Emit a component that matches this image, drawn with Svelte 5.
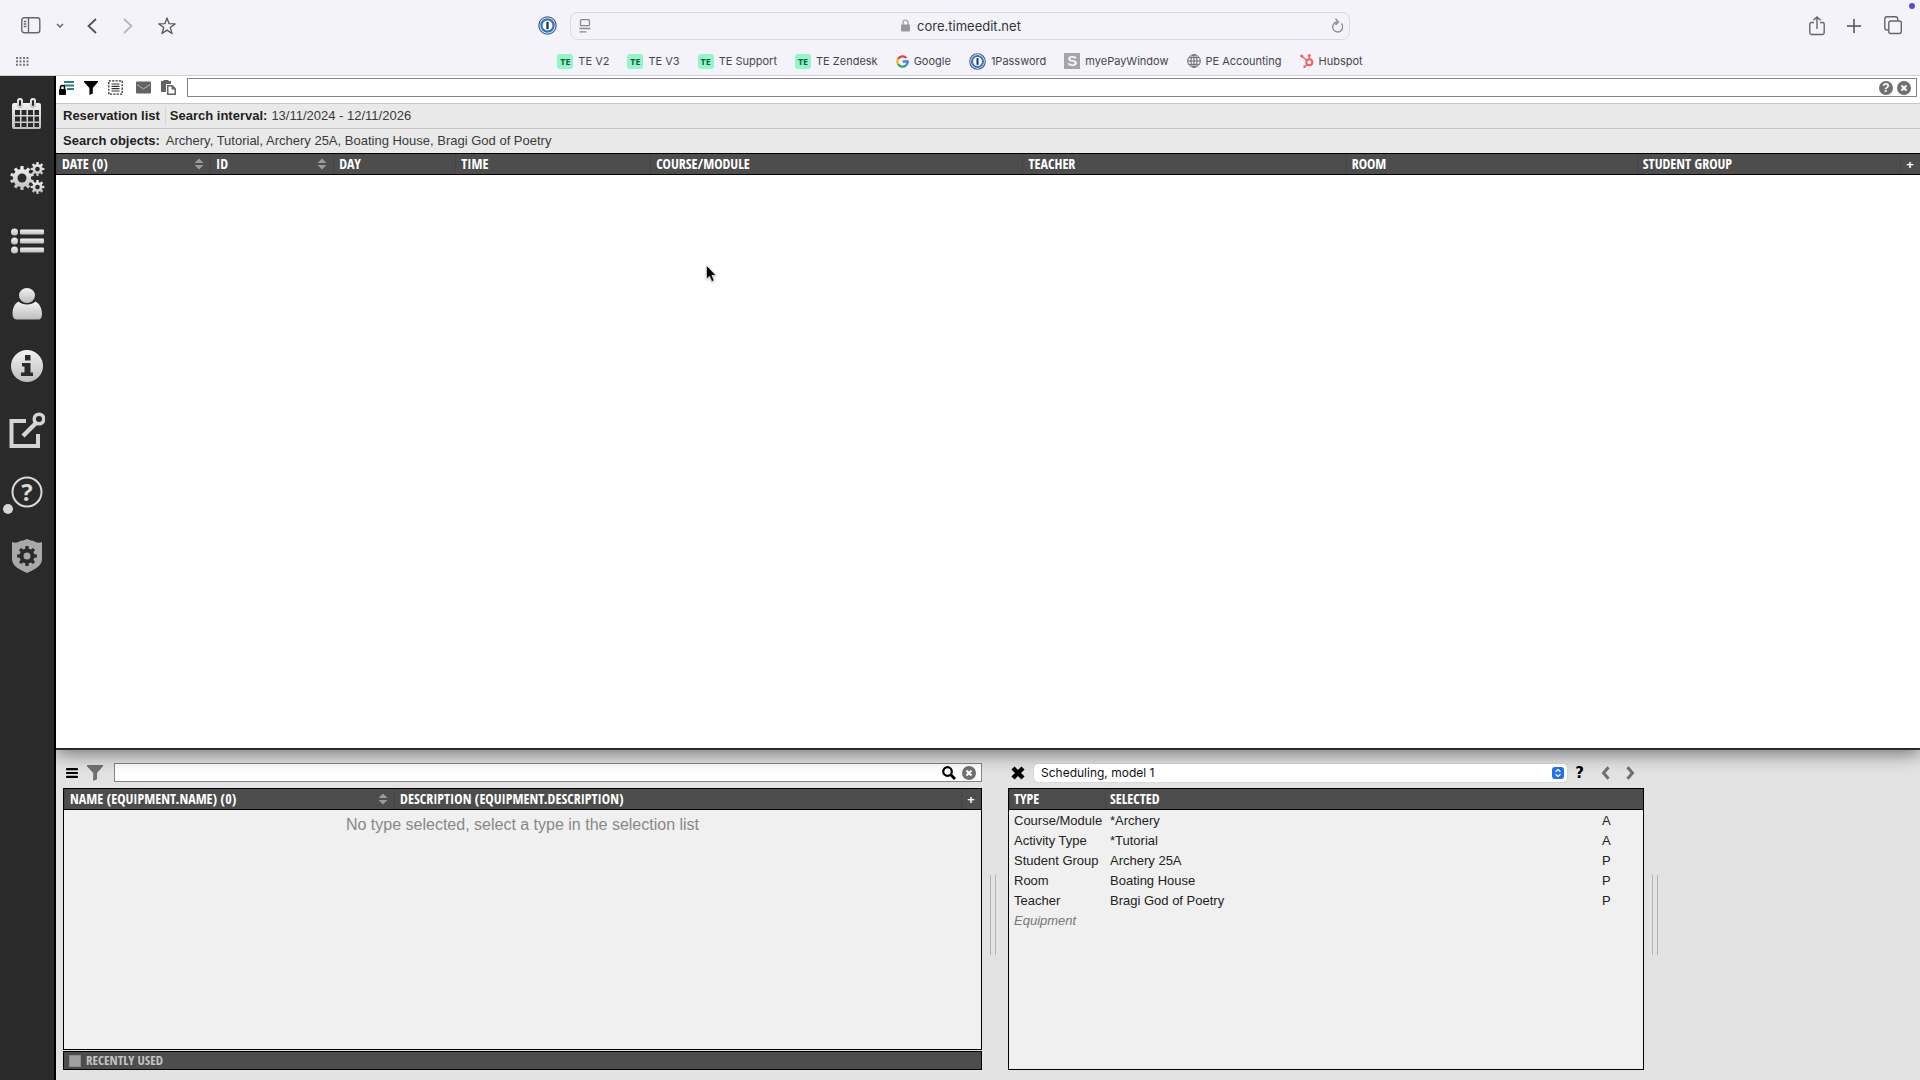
<script>
  // Builds the outline of a toothed gear centred on (cx, cy).
  function gear(cx, cy, outer, inner, teeth) {
    const step = (Math.PI * 2) / teeth;
    const pts = [];
    for (let i = 0; i < teeth; i++) {
      const a = i * step;
      for (const [off, r] of [[-0.3, inner], [-0.2, outer], [0.2, outer], [0.3, inner]]) {
        const t = a + off * step;
        pts.push(`${(cx + r * Math.sin(t)).toFixed(2)} ${(cy - r * Math.cos(t)).toFixed(2)}`);
      }
    }
    return `M${pts.join('L')}Z`;
  }

  const bookmarks = [
    { label: 'TE V2', icon: 'te' },
    { label: 'TE V3', icon: 'te' },
    { label: 'TE Support', icon: 'te' },
    { label: 'TE Zendesk', icon: 'te' },
    { label: 'Google', icon: 'google' },
    { label: '1Password', icon: 'onepass' },
    { label: 'myePayWindow', icon: 's' },
    { label: 'PE Accounting', icon: 'globe' },
    { label: 'Hubspot', icon: 'hubspot' }
  ];

  const nav = ['Calendar', 'Settings', 'Lists', 'User', 'Information', 'External', 'Help', 'Admin'];

  const columns = [
    { label: 'DATE (0)', share: 154, sort: true },
    { label: 'ID', share: 123, sort: true },
    { label: 'DAY', share: 122 },
    { label: 'TIME', share: 195 },
    { label: 'COURSE/MODULE', share: 372 },
    { label: 'TEACHER', share: 323 },
    { label: 'ROOM', share: 291 },
    { label: 'STUDENT GROUP', share: 263 },
    { label: '+', share: 20, add: true }
  ];
  const total = columns.reduce((sum, c) => sum + c.share, 0);

  const selected = [
    { type: 'Course/Module', value: '*Archery', flag: 'A' },
    { type: 'Activity Type', value: '*Tutorial', flag: 'A' },
    { type: 'Student Group', value: 'Archery 25A', flag: 'P' },
    { type: 'Room', value: 'Boating House', flag: 'P' },
    { type: 'Teacher', value: 'Bragi God of Poetry', flag: 'P' },
    { type: 'Equipment', value: '', flag: '', empty: true }
  ];

  let query = $state('');
  let typeQuery = $state('');
</script>

{#snippet onepass(size)}
  <svg width={size} height={size} viewBox="0 0 18 18">
    <circle cx="9" cy="9" r="8.2" fill="#fff" stroke="#4a5f80" stroke-width="1.2" />
    <circle cx="9" cy="9" r="5.8" fill="#fff" stroke="#2f74c8" stroke-width="2.2" />
    <rect x="7.9" y="5.4" width="2.2" height="7.2" rx="0.8" fill="#26364f" />
  </svg>
{/snippet}

{#snippet sortArrows()}
  <svg class="sort" width="10" height="12" viewBox="0 0 10 12" fill="#9b9b9b">
    <path d="M5 .5 9.5 5h-9zM5 11.5.5 7h9z" />
  </svg>
{/snippet}

{#snippet funnel(w, color)}
  <svg width={w} height={w} viewBox="0 0 14 14" fill={color}>
    <path d="M0 0h14v1L8.800 7v5.500L5.400 14V7L0 1z" />
  </svg>
{/snippet}

{#snippet clearIcon()}
  <svg width="14" height="14" viewBox="0 0 14 14">
    <circle cx="7" cy="7" r="7" fill="#707070" />
    <path d="M4.500 4.500l5 5M9.500 4.500l-5 5" stroke="#fff" stroke-width="2.200" />
  </svg>
{/snippet}

<div class="app">
  <header class="chrome">
    <div class="bar">
      <div class="left">
        <button aria-label="Sidebar" class="i-side">
          <svg width="20" height="17" viewBox="0 0 20 17" fill="none" stroke="#66666b" stroke-width="1.4">
            <rect x="0.800" y="0.800" width="18" height="15" rx="2.500" />
            <path d="M7.500 1v15M2.800 4.500h2.500M2.800 7h2.500M2.800 9.500h2.500" />
          </svg>
        </button>
        <button aria-label="Tab groups" class="i-down">
          <svg width="8" height="6" viewBox="0 0 8 6" fill="none" stroke="#66666b" stroke-width="1.500"><path d="M1 1l3 3 3-3" /></svg>
        </button>
        <button aria-label="Back" class="i-back">
          <svg width="10" height="16" viewBox="0 0 10 16" fill="none" stroke="#505055" stroke-width="1.800"><path d="M9 1L1.500 8 9 15" /></svg>
        </button>
        <button aria-label="Forward" class="i-fwd">
          <svg width="10" height="16" viewBox="0 0 10 16" fill="none" stroke="#b6b6bb" stroke-width="1.800"><path d="M1 1l7.500 7L1 15" /></svg>
        </button>
        <button aria-label="Favourite">
          <svg width="18" height="18" viewBox="0 0 18 18" fill="none" stroke="#55555a" stroke-width="1.300" stroke-linejoin="round">
            <path d="M9 1l2.100 5.700 6 .200-4.800 3.700 1.700 5.900L9 13.100 4 16.500l1.700-5.900L.900 6.900l6-.200z" />
          </svg>
        </button>
      </div>
      <div class="address">
        <button aria-label="1Password">{@render onepass(19)}</button>
        <div class="url">
          <svg width="12" height="14" viewBox="0 0 12 14" fill="none" stroke="#88888d" stroke-width="1.300"><rect x="1.500" y="0.700" width="9" height="6" rx="1" /><path d="M.500 9.500h11M.500 12.800h7" /></svg>
          <span class="host">
            <svg width="9" height="13" viewBox="0 0 9 13"><rect y="5.500" width="9" height="7" rx="1" fill="#98989c" /><path d="M2 6V3.500a2.500 2.500 0 0 1 5 0V6" fill="none" stroke="#98989c" stroke-width="1.200" /></svg>
            core.timeedit.net
          </span>
          <button aria-label="Reload">
            <svg width="12" height="15" viewBox="0 0 12 15" fill="none" stroke="#88888d" stroke-width="1.300"><path d="M10.300 5.500A5 5 0 1 1 6 4M4.500.800L7.500 4l-3 3" /></svg>
          </button>
        </div>
      </div>
      <div class="right">
        <button aria-label="Share">
          <svg width="16" height="20" viewBox="0 0 16 20" fill="none" stroke="#66666b" stroke-width="1.400"><path d="M5 6.500H2.500A1.700 1.700 0 0 0 .800 8.200v8.600a1.700 1.700 0 0 0 1.700 1.700h11a1.700 1.700 0 0 0 1.700-1.700V8.200a1.700 1.700 0 0 0-1.700-1.700H11M8 13V1M4.500 4.200L8 1l3.500 3.200" /></svg>
        </button>
        <button aria-label="New tab">
          <svg width="14" height="14" viewBox="0 0 14 14" stroke="#505055" stroke-width="1.500"><path d="M7 0v14M0 7h14" /></svg>
        </button>
        <button aria-label="Tabs">
          <svg width="18" height="19" viewBox="0 0 18 19" fill="none" stroke="#66666b" stroke-width="1.400"><rect x="4.800" y="5" width="12.500" height="12.500" rx="2" /><path d="M4.500 14H3a2.200 2.200 0 0 1-2.200-2.200V3A2.200 2.200 0 0 1 3 .800h8.500A2.200 2.200 0 0 1 13.700 3v1.800" /></svg>
        </button>
        <span class="rec"></span>
      </div>
    </div>
    <nav class="bookmarks" aria-label="Bookmarks">
      <button aria-label="Start page">
        <svg width="13" height="9" viewBox="0 0 13 9" fill="#77777c">
          {#each [0, 1, 2, 3] as c}{#each [0, 1, 2] as r}<rect x={c * 3.500} y={r * 3.400} width="2" height="2" />{/each}{/each}
        </svg>
      </button>
      <div class="marks">
        {#each bookmarks as b}
          <a href="#{b.label}">
            {#if b.icon === 'te'}<span class="te">TE</span>
            {:else if b.icon === 'google'}
              <svg width="13" height="13" viewBox="0 0 14 14" fill="none" stroke-width="2.500">
                <path d="M11.200 3.200A5.600 5.600 0 0 0 2.200 4.300" stroke="#e5453a" />
                <path d="M2.200 4.300a5.600 5.600 0 0 0 0 5.400" stroke="#f3b917" />
                <path d="M2.200 9.700a5.600 5.600 0 0 0 8.500 1.500" stroke="#35a456" />
                <path d="M10.700 11.200A5.600 5.600 0 0 0 12.600 7H7.200" stroke="#4180ee" />
              </svg>
            {:else if b.icon === 'onepass'}{@render onepass(17)}
            {:else if b.icon === 's'}<span class="s">S</span>
            {:else if b.icon === 'globe'}
              <svg width="14" height="14" viewBox="0 0 14 14" fill="none" stroke="#66666b"><circle cx="7" cy="7" r="6.300" /><ellipse cx="7" cy="7" rx="3" ry="6.300" /><path d="M7 .700v12.600M.700 7h12.600M1.800 3.700h10.400M1.800 10.300h10.400" /></svg>
            {:else}
              <svg width="14" height="14" viewBox="0 0 14 14" fill="none" stroke="#ee6268"><circle cx="9.300" cy="8.300" r="3" stroke-width="2" /><path d="M9.300 5V2M7 6.500L2 2.300M7.200 10.500L4.800 12.700" stroke-width="1.400" /><g fill="#ee6268" stroke="none"><circle cx="9.300" cy="1.600" r="1.500" /><circle cx="1.700" cy="2" r="1.600" /><circle cx="4.500" cy="12.700" r="1.200" /></g></svg>
            {/if}
            {b.label}
          </a>
        {/each}
      </div>
    </nav>
  </header>

  <div class="body">
    <nav class="side" aria-label="Main">
      <svg width="0" height="0" class="defs"><defs><linearGradient id="metal" x1="0" y1="0" x2="0" y2="1"><stop offset="0" stop-color="#f2f2f2" /><stop offset="1" stop-color="#bdbdbd" /></linearGradient></defs></svg>
      {#each nav as item, i}
        <button aria-label={item}>
          <svg width="36" height="36" viewBox="0 0 36 36" fill="url(#metal)">
            {#if i === 0}
              <path fill-rule="evenodd" d="M6 6h24a2 2 0 0 1 2 2v22a2 2 0 0 1-2 2H5a2 2 0 0 1-2-2V8a2 2 0 0 1 2-2zM6 13v5h5v-5zm6.500 0v5h5v-5zm6.500 0v5h5v-5zm6.500 0v5h4.500v-5zM6 19.500v5h5v-5zm6.500 0v5h5v-5zm6.500 0v5h5v-5zm6.500 0v5h4.500v-5zM6 26v4h5v-4zm6.500 0v4h5v-4zm6.500 0v4h5v-4zm6.500 0v4h4.500v-4z" />
              <rect x="8" y="1" width="6" height="10" rx="3" /><rect x="21" y="1" width="6" height="10" rx="3" />
              <rect x="10" y="3" width="2" height="6" rx="1" fill="#2a2a2a" /><rect x="23" y="3" width="2" height="6" rx="1" fill="#2a2a2a" />
            {:else if i === 1}
              <path d={gear(13, 18, 12, 9, 10)} /><circle cx="13" cy="18" r="4.500" fill="#2a2a2a" />
              <path d={gear(28.500, 9, 7, 5, 8)} /><circle cx="28.500" cy="9" r="2.300" fill="#2a2a2a" />
              <path d={gear(28.500, 27, 7, 5, 8)} /><circle cx="28.500" cy="27" r="2.300" fill="#2a2a2a" />
            {:else if i === 2}
              {#each [9, 18, 27] as y}<circle cx="5.500" cy={y} r="3.500" /><rect x="11" y={y - 2.500} width="24" height="5" rx="1" />{/each}
            {:else if i === 3}
              <ellipse cx="18" cy="9.500" rx="8" ry="7.500" /><path d="M9.500 15.500c4 4 13 4 17 0 4 2 6.500 7 6.500 12 0 4-1 6-4 6H8c-3 0-4.500-2-4.500-6 0-5 2-10 6-12z" />
            {:else if i === 4}
              <circle cx="18" cy="17" r="16" /><path d="M16 6h5.500v5.500H16zM13 14h8.500v9.500H24V27H12v-3.500h3.500v-6H13z" fill="#2a2a2a" />
            {:else if i === 5}
              <path d="M17 9H2.500v25H29V22" fill="none" stroke="#d4d4d4" stroke-width="4" /><path d="M14 24L28 10" stroke="#d4d4d4" stroke-width="4.500" /><circle cx="30" cy="7" r="4.800" fill="none" stroke="#d4d4d4" stroke-width="3.500" />
            {:else if i === 6}
              <circle cx="18" cy="17" r="14.500" fill="none" stroke="#d9d9d9" stroke-width="2" /><text x="18" y="26" text-anchor="middle" class="q">?</text>
            {:else}
              <path d="M3 4c3 1 6 1 8-1 2 0 4-1 7-2 3 1 5 2 7 2 2 2 5 2 8 1v17c0 7-8 11-15 14C11 32 3 28 3 21z" fill="#a9a9a9" /><path d={gear(18, 18, 10, 7.500, 8)} fill="#2a2a2a" /><circle cx="18" cy="18" r="3.500" fill="#a9a9a9" />
            {/if}
          </svg>
          {#if i === 6}<span class="dot"></span>{/if}
        </button>
      {/each}
    </nav>

    <main>
      <section class="list">
        <div class="tools">
          <div class="icons">
            <button aria-label="Locked list"><svg width="15" height="15" viewBox="0 0 15 15"><path d="M5 2h10M5 5.500h10M8 9h7" stroke="#2f7f80" stroke-width="1.800" /><rect y="9" width="7" height="6" rx="1" /><path d="M1.500 10V7.500a2 2 0 0 1 4 0V10" fill="none" stroke="#000" stroke-width="1.500" /></svg></button>
            <button aria-label="Filter">{@render funnel(14, '#000')}</button>
            <button aria-label="Select all"><svg width="15" height="15" viewBox="0 0 15 15" fill="none" stroke="#333"><rect x="0.800" y="0.800" width="13.400" height="13.400" stroke-width="1.300" stroke-dasharray="2.200 1.150" /><path d="M3.500 4h8M3.500 6.300h8M3.500 8.700h8M3.500 11h8" stroke-width="1.200" /></svg></button>
            <button aria-label="Mail" class="mail"><svg width="15" height="13" viewBox="0 0 15 13"><rect y="0.500" width="15" height="12" rx="1" fill="#636363" /><path d="M1 3.500l6.500 4.500L14 3.500" fill="none" stroke="#bbb" stroke-width="1" /></svg></button>
            <button aria-label="Copy"><svg width="15" height="15" viewBox="0 0 15 15" fill="#636363"><path d="M0 1h2.500V0h5v1H10v3H5v8H0z" /><path d="M6 5h5.500L15 8.500V15H6z" /><path d="M7.500 6.500h3v3h3v4h-6z" fill="#fff" /></svg></button>
          </div>
          <div class="field">
            <input type="text" aria-label="Search reservations" bind:value={query} />
            <button aria-label="Search help"><span class="round">?</span></button>
            <button aria-label="Clear search">{@render clearIcon()}</button>
          </div>
        </div>
        <div class="info"><strong class="title">Reservation list</strong><strong>Search interval:</strong><span>13/11/2024 - 12/11/2026</span></div>
        <div class="info objects"><strong>Search objects:</strong><span>Archery, Tutorial, Archery 25A, Boating House, Bragi God of Poetry</span></div>
        <div class="results">
          <table>
            <colgroup>{#each columns as c}<col style="width: {(c.share / total) * 100}%" />{/each}</colgroup>
            <thead>
              <tr>
                {#each columns as c}
                  <th scope="col" class:add={c.add}>
                    {#if c.add}<button aria-label="Add column">+</button>
                    {:else}<span class="head">{c.label}{#if c.sort}{@render sortArrows()}{/if}</span>{/if}
                  </th>
                {/each}
              </tr>
            </thead>
          </table>
        </div>
      </section>

      <section class="bottom">
        <div class="pane">
          <div class="tools2">
            <button aria-label="Menu" class="menu"><svg width="12" height="10" viewBox="0 0 12 10"><path d="M1 1.200h10M1 5h10M1 8.800h10" stroke="#000" stroke-width="2.200" stroke-linecap="round" /></svg></button>
            <button aria-label="Filter types">{@render funnel(16, '#707070')}</button>
            <div class="field">
              <input type="text" aria-label="Search objects" bind:value={typeQuery} />
              <button aria-label="Search"><svg width="14" height="14" viewBox="0 0 14 14" fill="none" stroke="#000"><circle cx="5.500" cy="5.500" r="4.300" stroke-width="2.200" /><path d="M8.800 8.800l4.200 4.200" stroke-width="2.800" /></svg></button>
              <button aria-label="Clear">{@render clearIcon()}</button>
            </div>
          </div>
          <div class="box">
            <table>
              <colgroup><col class="c-name" /><col /><col class="c-add" /></colgroup>
              <thead><tr>
                <th scope="col"><span class="head">NAME (EQUIPMENT.NAME) (0){@render sortArrows()}</span></th>
                <th scope="col">DESCRIPTION (EQUIPMENT.DESCRIPTION)</th>
                <th scope="col" class="add"><button aria-label="Add column">+</button></th>
              </tr></thead>
            </table>
            <p>No type selected, select a type in the selection list</p>
          </div>
          <label class="recent"><input type="checkbox" />RECENTLY USED</label>
        </div>

        <div class="split"></div>

        <div class="pane">
          <div class="tools2 model">
            <button aria-label="Close" class="close"><svg width="14" height="14" viewBox="0 0 14 14"><path d="M2 2l10 10M12 2L2 12" stroke="#000" stroke-width="4.400" /></svg></button>
            <span class="select">
              <select aria-label="Model"><option>Scheduling, model 1</option></select>
              <svg width="12" height="12" viewBox="0 0 12 12"><rect width="12" height="12" rx="3" fill="#2470e8" /><path d="M3.500 4.800L6 2.500l2.500 2.300M3.500 7.200L6 9.500l2.500-2.300" fill="none" stroke="#fff" stroke-width="1.200" /></svg>
            </span>
            <button class="ask" aria-label="Help">?</button>
            <button aria-label="Previous" class="prev"><svg width="9" height="14" viewBox="0 0 9 14" fill="none" stroke="#707070" stroke-width="3"><path d="M7.500 1.200L2.500 7l5 5.800" /></svg></button>
            <button aria-label="Next"><svg width="9" height="14" viewBox="0 0 9 14" fill="none" stroke="#707070" stroke-width="3"><path d="M1.500 1.200l5 5.800-5 5.800" /></svg></button>
          </div>
          <div class="box">
            <table class="picked">
              <colgroup><col class="c-type" /><col /><col class="c-flag" /></colgroup>
              <thead><tr><th scope="col">TYPE</th><th scope="col">SELECTED</th><th aria-label="Flag"></th></tr></thead>
              <tbody>
                {#each selected as row}
                  <tr class:empty={row.empty}><td>{row.type}</td><td>{row.value}</td><td>{row.flag}</td></tr>
                {/each}
              </tbody>
            </table>
          </div>
        </div>

        <div class="split"></div>
        <div></div>
      </section>
    </main>
  </div>

  <svg class="pointer" width="12" height="18" viewBox="0 0 12 18"><path d="M.500.500v13.500l3-2.800 2.300 5.300 2.300-1L5.900 10.300H10z" stroke="#fff" stroke-width="0.600" /></svg>
</div>

<style>
  :global(body) { margin: 0; background: #e3e3e3; }
  .app {
    position: relative;
    display: flex;
    flex-direction: column;
    min-height: 100vh;
    font: 13px/20px "Liberation Sans", Arial, sans-serif;
    color: #222;
  }
  .app :global(svg) { display: block; flex: none; }
  button { display: block; flex: none; padding: 0; border: 0; background: none; font: inherit; color: inherit; }
  input, select { font: inherit; box-sizing: border-box; margin: 0; }

  .chrome { box-sizing: border-box; height: 76px; background: #f4f3f9; border-bottom: 1px solid #cfcfd8; font-family: Inter, sans-serif; color: #46464b; }
  .bar { display: grid; grid-template-columns: 538fr 812fr 570fr; align-items: center; height: 51px; }
  .left { display: flex; align-items: center; padding-left: 21px; }
  .i-side { margin-right: 15px; }
  .i-down { margin-right: 23px; }
  .i-back { margin-right: 26px; }
  .i-fwd { margin-right: 25px; }
  .address { display: flex; align-items: center; gap: 13px; }
  .url {
    flex: 1;
    display: flex;
    align-items: center;
    justify-content: space-between;
    box-sizing: border-box;
    height: 28px;
    padding: 0 6px 0 8px;
    border: 1px solid #dadae0;
    border-radius: 8px;
    font-size: 13px;
    color: #333338;
  }
  .host { display: flex; align-items: center; gap: 7px; }
  .right { display: flex; align-items: center; justify-content: flex-end; gap: 22px; padding-right: 18px; position: relative; }
  .right button:last-of-type { margin-left: 1px; }
  .rec { position: absolute; top: -13px; right: 5px; width: 6px; height: 6px; border-radius: 50%; background: #5a49c8; }
  .bookmarks { display: grid; grid-template-columns: 1fr auto 1fr; align-items: center; height: 16px; padding-left: 16px; }
  .marks { display: flex; gap: 18px; font-size: 11px; margin-right: 16px; }
  .marks a { display: flex; align-items: center; gap: 5px; color: inherit; text-decoration: none; white-space: nowrap; }
  .te { width: 16px; height: 15px; border-radius: 3px; background: #94f5c8; font: bold 9px/15px "Open Sans", sans-serif; text-align: center; color: #12613f; }
  .s { width: 16px; height: 16px; background: #a5a5a8; font: bold 15px/16px "Liberation Sans", sans-serif; text-align: center; color: #f4f3f9; }

  .body { flex: 1; display: flex; }
  .side { flex: none; box-sizing: border-box; width: 56px; padding: 21px 0; border-right: 2px solid #000; background: #2a2a2a; display: flex; flex-direction: column; gap: 27px; }
  .side .defs { position: absolute; }
  .side button { position: relative; align-self: center; }
  .q { font: bold 24px "Open Sans", sans-serif; fill: #d9d9d9; }
  .dot { position: absolute; left: -6px; top: 29px; width: 10px; height: 10px; border-radius: 50%; background: #d6d6d6; }

  main { flex: 1; min-width: 0; display: flex; flex-direction: column; }
  .list { flex: 672 1 0; display: flex; flex-direction: column; background: #fff; border-bottom: 2px solid #2a2a2a; box-shadow: 0 3px 18px #0008; position: relative; clip-path: inset(0 0 -30px 0); }
  .tools { display: flex; align-items: center; box-sizing: border-box; height: 27px; padding: 0 3px 4px 3px; }
  .icons { display: flex; align-items: center; gap: 10px; width: 128px; flex: none; }
  .mail { margin-left: 3px; }
  .field { flex: 1; display: flex; align-items: center; gap: 4px; box-sizing: border-box; height: 19px; padding-right: 5px; border: 1px solid #85858d; background: #fff; }
  .field input { flex: 1; min-width: 0; height: 17px; border: 0; padding: 0 4px; background: none; outline: 0; }
  .round { display: block; width: 14px; height: 14px; border-radius: 50%; background: #707070; color: #fff; font: bold 12px/14px "Liberation Sans", sans-serif; text-align: center; }
  .info { display: flex; align-items: center; box-sizing: border-box; height: 25px; padding: 0 7px; background: #e9e9e9; border-top: 1px solid #c6c6c6; }
  .info span { margin-left: 4px; color: #3a3a3a; }
  .title { padding-right: 5px; margin-right: 4px; border-right: 1px solid #d6d6d6; }
  .info.objects span { margin-left: 6px; }

  table { width: 100%; table-layout: fixed; border-collapse: separate; border-spacing: 0; }
  th {
    box-sizing: border-box;
    height: 22px;
    padding: 0 6px;
    background: #4d4d4d;
    border: solid #000;
    border-width: 1px 0;
    box-shadow: inset 1px 0 #444;
    font: bold 14px/18px "Open Sans Condensed", "Liberation Sans Narrow", "Liberation Sans", sans-serif;
    color: #fff;
    text-align: left;
    white-space: nowrap;
  }
  th.add { padding: 0; }
  th.add button { width: 100%; text-align: center; font: bold 13px/18px "Open Sans", sans-serif; }
  .head { display: flex; align-items: center; justify-content: space-between; }

  .bottom { flex: 307 1 0; display: grid; grid-template-columns: 919fr 26px 636fr 26px 250fr; padding: 13px 0 10px 7px; background: #e3e3e3; }
  .pane { display: flex; flex-direction: column; min-width: 0; }
  .tools2 { display: flex; align-items: center; height: 19px; margin-bottom: 6px; }
  .tools2 .menu { margin: 0 9px 0 3px; }
  .tools2 .field { margin-left: 11px; gap: 6px; }
  .box { flex: 1; border: 1px solid #000; border-top: 0; background: #f0f0f0; }
  .c-name { width: 36%; }
  .c-add { width: 20px; }
  .box p { margin: 5px 0; font-size: 16px; text-align: center; color: #888; }
  .recent { display: flex; align-items: center; gap: 5px; box-sizing: border-box; height: 19px; margin-top: 1px; padding-left: 5px; border: 1px solid #000; background: #4d4d4d; color: #c4c4c4; font: bold 13px/17px "Open Sans Condensed", "Liberation Sans Narrow", "Liberation Sans", sans-serif; }
  .recent input { appearance: none; width: 12px; height: 12px; background: #a0a0a0; border: 1px solid #8c8c8c; }
  .split { box-sizing: border-box; width: 6px; height: 80px; margin: 112px 0 0 8px; border: solid #b4b4b4; border-width: 0 1px; }
  .close { margin: 0 9px 0 3px; }
  .select { position: relative; flex: 1; }
  .select select { display: block; appearance: none; width: 100%; height: 18px; padding: 0 22px 0 7px; border: 0; border-radius: 4px; background: #fff; box-shadow: 0 0 1px #0006; font: 12px/18px Inter, sans-serif; color: #111; }
  .select svg { position: absolute; right: 3px; top: 3px; pointer-events: none; }
  .ask { margin: 0 17px 0 8px; font: bold 15px/18px "DejaVu Sans", sans-serif; color: #000; }
  .prev { margin-right: 16px; }
  .model { padding-right: 9px; }
  .c-type { width: 96px; }
  .c-flag { width: 51px; }
  .picked th, .picked td { padding: 0 5px; }
  .picked th:last-child { box-shadow: none; }
  .picked td:last-child { padding-left: 10px; }
  .picked td { height: 20px; line-height: 20px; }
  .picked tbody tr:first-child td { padding-top: 1px; }
  .empty td { font-style: italic; color: #777; }

  .pointer { position: absolute; left: 706px; top: 265px; pointer-events: none; filter: drop-shadow(0 1px 1px #0004); }
</style>
